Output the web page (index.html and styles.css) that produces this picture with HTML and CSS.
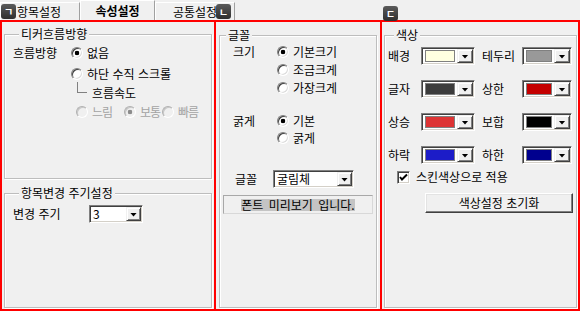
FILE: index.html
```html
<!DOCTYPE html>
<html lang="ko">

<head>
    <meta charset="UTF-8">
    <meta name="viewport" content="width=device-width, initial-scale=1.0">
    <title>속성설정</title>
    <link rel="stylesheet" href="styles.css">
</head>

<body>

    <div class="window">
        <!-- tab strip -->
        <div class="tabs">
            <div class="tab tab-first"><span class="badge">ㄱ</span>항목설정</div>
            <div class="tab active">속성설정</div>
            <div class="tab">공통설정</div>
            <span class="badge badge-font">ㄴ</span>
            <span class="badge badge-color">ㄷ</span>
        </div>

        <div class="panels">
            <!-- ticker panel -->
            <div class="panel panel-ticker">
                <fieldset class="group group-flow">
                    <legend>티커흐름방향</legend>
                    <div class="row">
                        <span class="label flow-label">흐름방향</span>
                        <label class="opt"><input type="radio" name="flow" checked>없음</label>
                    </div>
                    <div class="row flow-indent">
                        <label class="opt"><input type="radio" name="flow">하단 수직 스크롤</label>
                    </div>
                    <div class="tree">
                        <span class="tree-line"></span>
                        <span class="tree-text">흐름속도</span>
                    </div>
                    <div class="row speed">
                        <label class="opt disabled speed-slow"><input type="radio" name="speed" disabled>느림</label>
                        <label class="opt disabled speed-mid"><input type="radio" name="speed" checked disabled>보통</label>
                        <label class="opt disabled speed-fast"><input type="radio" name="speed" disabled>빠름</label>
                    </div>
                </fieldset>

                <fieldset class="group group-cycle">
                    <legend>항목변경 주기설정</legend>
                    <div class="row row-combo">
                        <span class="label cycle-label">변경 주기</span>
                        <div class="combo combo-cycle">
                            <span class="combo-text">3</span>
                            <span class="drop"></span>
                        </div>
                    </div>
                </fieldset>
            </div>

            <!-- font panel -->
            <div class="panel panel-font">
                <fieldset class="group group-font">
                    <legend>글꼴</legend>
                    <div class="field field-size">
                        <span class="label font-label">크기</span>
                        <div class="choices">
                            <label class="opt"><input type="radio" name="size" checked>기본크기</label>
                            <label class="opt"><input type="radio" name="size">조금크게</label>
                            <label class="opt"><input type="radio" name="size">가장크게</label>
                        </div>
                    </div>
                    <div class="field field-weight">
                        <span class="label font-label">굵게</span>
                        <div class="choices choices-tight">
                            <label class="opt"><input type="radio" name="weight" checked>기본</label>
                            <label class="opt"><input type="radio" name="weight">굵게</label>
                        </div>
                    </div>
                    <div class="field field-face">
                        <span class="label face-label">글꼴</span>
                        <div class="combo combo-face">
                            <span class="combo-text">굴림체</span>
                            <span class="drop"></span>
                        </div>
                    </div>
                    <div class="preview"><span class="preview-text">폰트 미리보기 입니다.</span></div>
                </fieldset>
            </div>

            <!-- color panel -->
            <div class="panel panel-color">
                <fieldset class="group group-color">
                    <legend>색상</legend>
                    <div class="color-row">
                        <span class="label color-label">배경</span>
                        <div class="combo combo-swatch"><span class="swatch" style="background:#ffffe1"></span><span class="drop"></span></div>
                        <span class="label color-label2">테두리</span>
                        <div class="combo combo-swatch small"><span class="swatch" style="background:#999999"></span><span class="drop"></span></div>
                    </div>
                    <div class="color-row">
                        <span class="label color-label">글자</span>
                        <div class="combo combo-swatch"><span class="swatch" style="background:#3c3c3c"></span><span class="drop"></span></div>
                        <span class="label color-label2">상한</span>
                        <div class="combo combo-swatch small"><span class="swatch" style="background:#c40000"></span><span class="drop"></span></div>
                    </div>
                    <div class="color-row">
                        <span class="label color-label">상승</span>
                        <div class="combo combo-swatch"><span class="swatch" style="background:#dd3434"></span><span class="drop"></span></div>
                        <span class="label color-label2">보합</span>
                        <div class="combo combo-swatch small"><span class="swatch" style="background:#000000"></span><span class="drop"></span></div>
                    </div>
                    <div class="color-row">
                        <span class="label color-label">하락</span>
                        <div class="combo combo-swatch"><span class="swatch" style="background:#1c1cc8"></span><span class="drop"></span></div>
                        <span class="label color-label2">하한</span>
                        <div class="combo combo-swatch small"><span class="swatch" style="background:#00008e"></span><span class="drop"></span></div>
                    </div>
                    <label class="check-row">
                        <span class="check">
                            <svg width="9" height="9" viewBox="0 0 9 9"><polyline points="1,4 3,6.5 8,1.5" fill="none" stroke="#000" stroke-width="2"/></svg>
                        </span>
                        스킨색상으로 적용
                    </label>
                    <button class="btn reset-btn">색상설정 초기화</button>
                </fieldset>
            </div>
        </div>
    </div>

</body>

</html>
```

FILE: styles.css
```css
body {
    margin: 0;
    background: #f0f0f0;
    font-family: "Noto Sans CJK KR", "Noto Sans", sans-serif;
    font-size: 12px;
    line-height: 14px;
    color: #000;
}

.window {
    position: relative;
    width: 580px;
    height: 311px;
    overflow: hidden;
}

/* tabs */
.tabs {
    display: flex;
    height: 20px;
}

.tab {
    box-sizing: border-box;
    height: 18px;
    margin-top: 2px;
    width: 80px;
    display: flex;
    align-items: center;
    justify-content: center;
    border-top: 1px solid #fff;
    border-left: 1px solid #fff;
    border-right: 1px solid #a0a0a0;
}

.tab-first {
    justify-content: flex-start;
}

.tab-first .badge {
    margin-right: 1px;
}

.tab.active {
    width: 75px;
    height: 20px;
    margin-top: 0;
    font-weight: bold;
}

.badge {
    display: inline-flex;
    align-items: center;
    justify-content: center;
    width: 15px;
    height: 15px;
    border-radius: 3px;
    background: linear-gradient(#5a5a5a, #2f2f2f);
    color: #fff;
    font-size: 10px;
    font-weight: bold;
    line-height: 1;
    z-index: 2;
}

.badge-font {
    position: absolute;
    left: 216px;
    top: 4px;
}

.badge-color {
    position: absolute;
    left: 383px;
    top: 6px;
}

/* panels */
.panels {
    display: flex;
    height: 291px;
}

.panel {
    box-sizing: border-box;
    border: 2px solid #f00;
    display: flex;
    flex-direction: column;
}

.panel-ticker {
    width: 216px;
}

.panel-font {
    width: 166px;
    border-left: 0;
}

.panel-color {
    width: 198px;
    border-left: 0;
}

/* group boxes */
.group {
    box-sizing: border-box;
    margin: 0;
    padding: 0;
    min-width: 0;
    border: 1px solid #bdbdbd;
    box-shadow: 1px 1px 0 #fff, inset 1px 1px 0 #fff;
}

.group legend {
    padding: 0 2px;
    margin-left: 6px;
    line-height: 14px;
    background: #f0f0f0;
    position: relative;
}

.group-flow {
    margin: 5px 2px 0 2px;
    height: 152px;
    padding: 5px 0 0 8px;
}

.group-cycle {
    flex: 1;
    margin: 7px 2px 1px 2px;
    padding: 5px 0 0 8px;
}

.group-font {
    flex: 1;
    margin: 6px 3px 1px 3px;
    padding: 3px 3px 0 3px;
}

.group-font legend {
    margin-left: 3px;
}

.group-color {
    flex: 1;
    margin: 6px 1px 1px 2px;
    padding: 5px 0 0 3px;
}

/* rows and labels */
.row {
    display: flex;
    align-items: center;
    height: 14px;
}

.label {
    flex: none;
}

.opt {
    display: flex;
    align-items: center;
    white-space: nowrap;
}

.flow-label {
    width: 58px;
}

.flow-indent {
    margin-top: 7px;
    padding-left: 58px;
}

.tree {
    display: flex;
    align-items: flex-start;
    margin-top: 1px;
    padding-left: 64px;
    height: 18px;
}

.tree-line {
    width: 10px;
    height: 11px;
    border-left: 1px solid #808080;
    border-bottom: 1px solid #808080;
    box-sizing: border-box;
}

.tree-text {
    margin: 4px 0 0 5px;
}

.speed {
    margin-top: 5px;
    padding-left: 63px;
    letter-spacing: -1px;
}

.speed-slow {
    width: 48px;
}

.speed-mid {
    width: 38px;
}

.speed-fast input {
    margin-right: 10px;
}

.disabled {
    color: #a3a3a3;
}

.row-combo {
    height: 18px;
}

.cycle-label {
    width: 76px;
}

/* radio buttons, classic look */
input[type="radio"] {
    appearance: none;
    box-sizing: border-box;
    width: 12px;
    height: 12px;
    margin: 0 4px 0 0;
    border-radius: 50%;
    border: 1px solid;
    border-color: #808080 #fff #fff #808080;
    box-shadow: inset 1px 1px 0 #404040, inset -1px -1px 0 #dcdcdc;
    background: #fff;
    flex: none;
}

input[type="radio"]:checked {
    background: radial-gradient(circle, #000 0, #000 2px, #fff 2.6px);
}

input[type="radio"]:disabled {
    background: #f0f0f0;
    box-shadow: inset 1px 1px 0 #c8c8c8, inset -1px -1px 0 #f0f0f0;
    border-color: #b0b0b0 #fff #fff #b0b0b0;
}

input[type="radio"]:disabled:checked {
    background: radial-gradient(circle, #8c8c8c 0, #8c8c8c 2px, #f0f0f0 2.6px);
}

/* font panel */
.field {
    display: flex;
    padding-left: 10px;
}

.font-label {
    width: 44px;
}

.choices {
    display: flex;
    flex-direction: column;
    gap: 4px;
}

.choices-tight {
    gap: 3px;
}

.field-weight {
    margin-top: 19px;
}

.field-face {
    margin-top: 25px;
    align-items: center;
}

.face-label {
    width: 38px;
    padding-left: 2px;
}

.preview {
    margin-top: 7px;
    height: 19px;
    box-sizing: border-box;
    border: 1px solid;
    border-color: #a8a8a8 #d8d8d8 #d8d8d8 #a8a8a8;
    display: flex;
    align-items: center;
    justify-content: center;
}

.preview-text {
    display: inline-block;
    background: #c4c4c4;
    line-height: 12px;
    word-spacing: 2px;
}

/* combos */
.combo {
    display: flex;
    box-sizing: border-box;
    height: 18px;
    padding: 1px;
    border: 1px solid;
    border-color: #808080 #fff #fff #808080;
    box-shadow: inset 1px 1px 0 #404040, inset -1px -1px 0 #d4d0c8;
    background: #fff;
}

.combo-text {
    flex: 1;
    padding-left: 2px;
    line-height: 14px;
    white-space: nowrap;
}

.combo-cycle {
    width: 54px;
}

.combo-face {
    width: 81px;
}

.drop {
    flex: none;
    width: 15px;
    box-sizing: border-box;
    border: 1px solid;
    border-color: #f0f0f0 #404040 #404040 #f0f0f0;
    box-shadow: inset 1px 1px 0 #fff, inset -1px -1px 0 #808080;
    background: #f0f0f0;
    display: flex;
    align-items: center;
    justify-content: center;
}

.drop::after {
    content: "";
    width: 7px;
    height: 4px;
    margin-top: 1px;
    background: #000;
    clip-path: polygon(0 0, 100% 0, 50% 100%);
}

/* color panel */
.color-row {
    display: flex;
    align-items: center;
    height: 18px;
    margin-bottom: 15px;
}

.color-label {
    width: 33px;
}

.color-label2 {
    width: 40px;
    margin-left: 7px;
}

.combo-swatch {
    width: 54px;
}

.combo-swatch.small {
    width: 50px;
}

.combo-swatch .drop {
    width: 16px;
}

.swatch {
    flex: 1;
    margin: 1px 2px 1px 2px;
    border: 1px solid #808080;
}

.check-row {
    display: flex;
    align-items: center;
    height: 14px;
    margin-top: -9px;
    padding-left: 9px;
}

.check {
    box-sizing: border-box;
    width: 13px;
    height: 13px;
    margin-right: 6px;
    border: 1px solid;
    border-color: #808080 #fff #fff #808080;
    box-shadow: inset 1px 1px 0 #404040, inset -1px -1px 0 #d4d0c8;
    background: #fff;
    display: flex;
    align-items: center;
    justify-content: center;
}

.check svg {
    display: block;
}

.btn {
    font: inherit;
    color: #000;
    box-sizing: border-box;
    height: 20px;
    width: 148px;
    margin: 9px 0 0 37px;
    padding: 0;
    background: #f0f0f0;
    border: 1px solid;
    border-color: #fff #404040 #404040 #fff;
    box-shadow: inset -1px -1px 0 #808080, inset 1px 1px 0 #e3e3e3;
    line-height: 16px;
}
```
